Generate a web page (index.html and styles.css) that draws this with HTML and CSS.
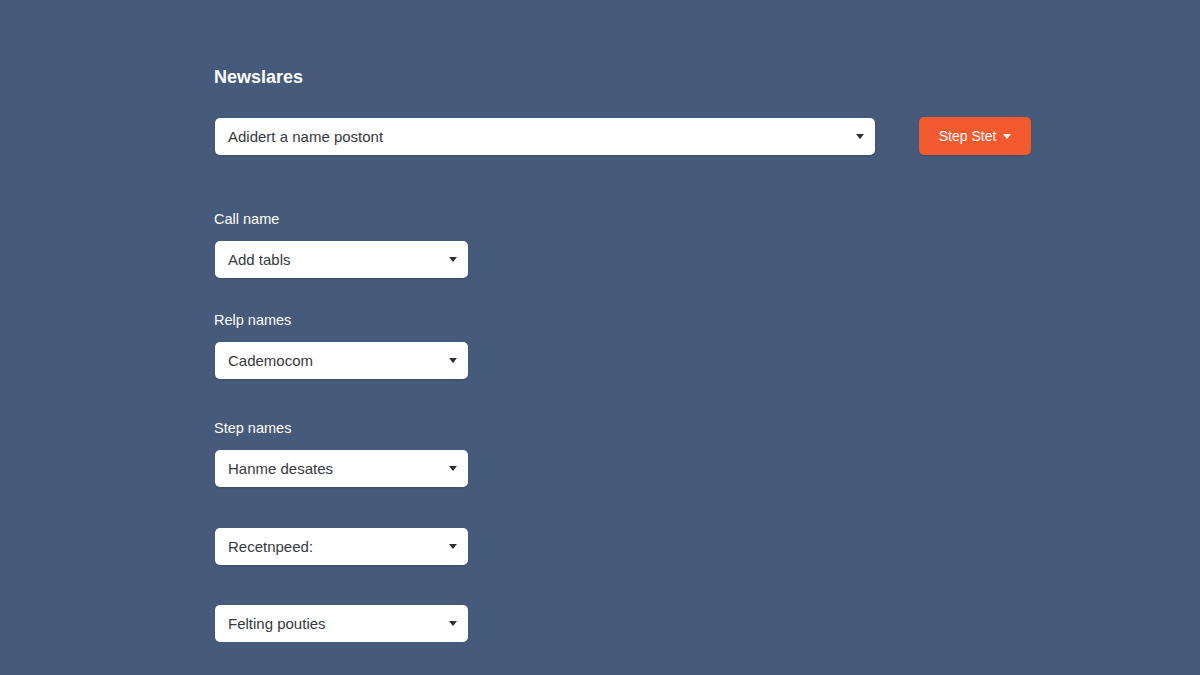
FILE: index.html
```html
<!DOCTYPE html>
<html lang="en">
<head>
  <meta charset="UTF-8">
  <title>Newslares</title>
  <link rel="stylesheet" href="styles.css">
</head>
<body>
  <div class="page">
    <h3 class="title">Newslares</h3>

    <div class="top-row">
      <div class="select wide">
        <span>Adidert a name postont</span>
        <span class="caret"></span>
      </div>
      <button class="step-btn">Step Stet <span class="caret light"></span></button>
    </div>

    <div class="field f1">
      <div class="label">Call name</div>
      <div class="select"><span>Add tabls</span><span class="caret"></span></div>
    </div>

    <div class="field f2">
      <div class="label">Relp names</div>
      <div class="select"><span>Cademocom</span><span class="caret"></span></div>
    </div>

    <div class="field f3">
      <div class="label">Step names</div>
      <div class="select"><span>Hanme desates</span><span class="caret"></span></div>
    </div>

    <div class="field f4">
      <div class="select"><span>Recetnpeed:</span><span class="caret"></span></div>
    </div>

    <div class="field f5">
      <div class="select"><span>Felting pouties</span><span class="caret"></span></div>
    </div>
  </div>
</body>
</html>
```

FILE: styles.css
```css
body { margin:0; padding:0; background:#465a7b; color:white; font-family:"Liberation Sans", Arial, sans-serif; }
.page { padding:66px 0 0 214px; }
.title { margin:0; font-size:18px; line-height:22px; font-weight:bold; }

.top-row { display:flex; align-items:center; gap:44px; margin-top:29px; }

.select {
  width:253px; height:37px; box-sizing:border-box;
  display:flex; align-items:center; justify-content:space-between;
  padding:0 11px 0 13px; margin-left:1px;
  background:#fff; color:#363a40; border-radius:5px;
  font-size:15px;
  box-shadow:0 1px 2px rgba(0,0,0,0.15);
}
.select.wide { width:660px; }

.caret {
  display:inline-block; width:0; height:0;
  border-left:4px solid transparent; border-right:4px solid transparent;
  border-top:5px solid #2b2f36;
}
.caret.light { border-top-color:#fff; margin-left:3px; vertical-align:2px; }

.step-btn {
  width:112px; height:38px; border:none; border-radius:5px;
  background:#f35b2f; color:#fff; font-family:inherit; font-size:14px;
  box-shadow:0 1px 2px rgba(0,0,0,0.15);
}

.field { margin-top:55px; }
.field.f2 { margin-top:33px; }
.field.f3 { margin-top:40px; }
.field.f4 { margin-top:41px; }
.field.f5 { margin-top:40px; }
.label { font-size:14.5px; line-height:18px; margin-bottom:13px; }
```
